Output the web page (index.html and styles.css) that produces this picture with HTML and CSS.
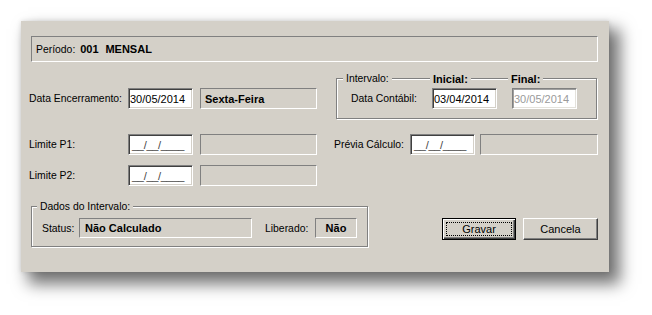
FILE: index.html
```html
<!DOCTYPE html>
<html lang="pt-BR">

<head>
    <meta charset="UTF-8">
    <title>Encerramento de Período</title>
    <link rel="stylesheet" href="styles.css">
</head>

<body>
    <div class="panel">
        <div class="periodo">Período: <b class="cod">001</b> <b>MENSAL</b></div>

        <div class="row row-a">
            <div class="group">
                <span class="label">Data Encerramento:</span>
                <span class="input">30/05/2014</span>
                <span class="static"><b>Sexta-Feira</b></span>
            </div>

            <div class="etched intervalo">
                <div class="legend">
                    <span class="leg leg-first">Intervalo:</span>
                    <span class="leg leg-ini"><b>Inicial:</b></span>
                    <span class="leg leg-fin"><b>Final:</b></span>
                </div>
                <div class="intervalo-body">
                    <span class="label contabil">Data Contábil:</span>
                    <span class="input">03/04/2014</span>
                    <span class="input disabled">30/05/2014</span>
                </div>
            </div>
        </div>

        <div class="row row-b">
            <div class="group">
                <span class="label">Limite P1:</span>
                <span class="input mask">__/__/____</span>
                <span class="static"></span>
            </div>
            <div class="group previa">
                <span class="label">Prévia Cálculo:</span>
                <span class="input mask">__/__/____</span>
                <span class="static"></span>
            </div>
        </div>

        <div class="row row-c">
            <div class="group">
                <span class="label">Limite P2:</span>
                <span class="input mask">__/__/____</span>
                <span class="static"></span>
            </div>
        </div>

        <div class="row row-d">
            <div class="etched dados">
                <div class="legend">
                    <span class="leg leg-dados">Dados do Intervalo:</span>
                </div>
                <div class="dados-body">
                    <span class="label status">Status:</span>
                    <span class="static status-box"><b>Não Calculado</b></span>
                    <span class="label liberado">Liberado:</span>
                    <span class="static nao-box"><b>Não</b></span>
                </div>
            </div>

            <div class="buttons">
                <button class="btn default"><span class="focus">Gravar</span></button>
                <button class="btn">Cancela</button>
            </div>
        </div>
    </div>
</body>

</html>
```

FILE: styles.css
```css
html {
    background-color: #fff;
}

body {
    margin: 0;
    padding: 21px 0 42px 21px;
    min-height: 315px;
    box-sizing: border-box;
    background-color: #fff;
    font-family: "Liberation Sans", Arial, sans-serif;
    font-size: 10.4px;
    color: #000;
}

b {
    font-size: 11px;
}

.label {
    white-space: nowrap;
}

.panel {
    box-sizing: border-box;
    width: 588px;
    height: 251px;
    padding: 15px 11px 0 8px;
    background-color: #D4D0C8;
    box-shadow: 9px 10px 15px 2px rgba(0, 0, 0, 0.55), 0 0 5px rgba(0, 0, 0, 0.12);
}

.periodo {
    box-sizing: border-box;
    height: 26px;
    margin-left: 2px;
    padding-left: 4px;
    line-height: 24px;
    border: 1px solid;
    border-color: #808080 #fff #fff #808080;
}

.periodo .cod {
    margin: 0 4px 0 2px;
}

.row {
    display: flex;
    align-items: center;
}

.row-a {
    margin-top: 16px;
}

.row-b {
    margin-top: 15px;
}

.row-c {
    margin-top: 10px;
}

.row-d {
    margin-top: 20px;
    align-items: flex-start;
}

.group {
    display: grid;
    grid-template-columns: 92px 65px 117px;
    column-gap: 7px;
    align-items: center;
}

.group.previa {
    margin-left: 17px;
    grid-template-columns: 71px 65px 118px;
    column-gap: 5px;
}

.input {
    box-sizing: border-box;
    height: 21px;
    padding-left: 1px;
    display: flex;
    align-items: center;
    background-color: #fff;
    border: 1px solid;
    border-color: #808080 #fff #fff #808080;
    box-shadow: inset 1px 1px #404040, inset -1px -1px #D4D0C8;
    font-size: 11px;
}

.input.mask {
    color: #444;
    padding-left: 3px;
    letter-spacing: -0.3px;
}

.input.disabled {
    color: #9a9a9a;
    box-shadow: inset 1px 1px #a0a0a0, inset -1px -1px #e4e2dc;
}

.static {
    box-sizing: border-box;
    height: 21px;
    padding-left: 4px;
    display: flex;
    align-items: center;
    white-space: nowrap;
    border: 1px solid;
    border-color: #808080 #fff #fff #808080;
}

.etched {
    box-sizing: border-box;
    border: 1px solid #808080;
    box-shadow: inset 1px 1px #fff, 1px 1px #fff;
}

.legend {
    display: flex;
    height: 13px;
    margin-top: -7px;
    align-items: center;
    white-space: nowrap;
}

.leg {
    display: flex;
    align-items: center;
    height: 13px;
    padding: 0 3px;
    background-color: #D4D0C8;
}

.intervalo {
    width: 261px;
    margin-left: 19px;
    padding-bottom: 9px;
}

.intervalo .legend,
.intervalo-body {
    display: grid;
    grid-template-columns: 95px 80px 1fr;
    justify-items: start;
}

.intervalo-body {
    margin-top: 3px;
    align-items: center;
}

.intervalo-body .input {
    width: 65px;
}

.leg-first {
    margin-left: 6px;
}

.leg-ini {
    margin-left: -2px;
}

.leg-fin {
    margin-left: -4px;
}

.contabil {
    padding-left: 14px;
}

.dados {
    width: 337px;
    margin-left: 2px;
    padding-bottom: 8px;
}

.leg-dados {
    margin-left: 5px;
}

.dados-body {
    display: flex;
    align-items: center;
    margin-top: 5px;
}

.dados-body .static {
    height: 20px;
}

.status {
    width: 37px;
    padding-left: 10px;
}

.status-box {
    width: 173px;
    padding-left: 5px;
}

.liberado {
    width: 50px;
    margin-left: 13px;
}

.nao-box {
    width: 42px;
    justify-content: center;
    padding-left: 0;
}

.buttons {
    display: flex;
    gap: 7px;
    margin-left: auto;
    margin-top: 12px;
}

.btn {
    box-sizing: border-box;
    width: 75px;
    height: 22px;
    padding: 0;
    display: flex;
    align-items: center;
    justify-content: center;
    font-family: "Liberation Sans", Arial, sans-serif;
    font-size: 11px;
    color: #000;
    background-color: #D4D0C8;
    border: 1px solid;
    border-color: #fff #404040 #404040 #fff;
    box-shadow: inset -1px -1px #808080;
}

.btn.default {
    width: 74px;
    padding: 3px;
    border: 1px solid #000;
    box-shadow: inset 1px 1px #fff, inset -1px -1px #404040, inset -2px -2px #808080;
}

.focus {
    box-sizing: border-box;
    width: 100%;
    height: 100%;
    display: flex;
    align-items: center;
    justify-content: center;
    border: 1px dotted #000;
}
```
